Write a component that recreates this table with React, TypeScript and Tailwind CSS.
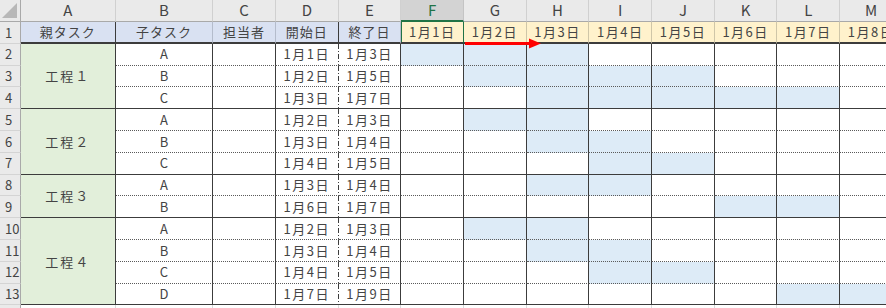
import React from "react";

type Task = [string, number, number];

const groups: { name: string; tasks: Task[] }[] = [
  { name: "工程１", tasks: [["A", 1, 3], ["B", 2, 5], ["C", 3, 7]] },
  { name: "工程２", tasks: [["A", 2, 3], ["B", 3, 4], ["C", 4, 5]] },
  { name: "工程３", tasks: [["A", 3, 4], ["B", 6, 7]] },
  { name: "工程４", tasks: [["A", 2, 3], ["B", 3, 4], ["C", 4, 5], ["D", 7, 9]] },
];

const letters = ["A", "B", "C", "D", "E", "F", "G", "H", "I", "J", "K", "L", "M"];
const days = [1, 2, 3, 4, 5, 6, 7, 8];
const spanClass: Record<number, string> = { 2: "row-span-2", 3: "row-span-3", 4: "row-span-4" };

const rowHead =
  "flex items-center pl-[5px] bg-[#eaeaea] border-r border-r-[#a9a9a9] border-b border-b-[#d4d4d4] text-[13px] text-[#444]";

// dash-dot line on the right edge of the start-date column
const dashDot =
  "bg-[repeating-linear-gradient(to_bottom,#3c3c3c_0_5px,transparent_5px_7px,#3c3c3c_7px_8px,transparent_8px_10px)] bg-[length:1px_100%] bg-right bg-no-repeat pr-px";

function App() {
  let rowNo = 1;
  const rows: React.ReactNode[] = [];

  groups.forEach((g, gi) => {
    g.tasks.forEach((t, ti) => {
      rowNo++;
      const last = ti === g.tasks.length - 1;
      const bottom = last
        ? "border-b border-b-[#3c3c3c]"
        : "border-b border-b-[#5a5a5a] [border-bottom-style:dotted]";
      const [name, start, end] = t;
      rows.push(
        <div key={`h${rowNo}`} className={rowHead}>
          {rowNo}
        </div>
      );
      if (ti === 0) {
        rows.push(
          <div
            key={`g${gi}`}
            className={`${spanClass[g.tasks.length]} flex items-center justify-center bg-[#e2efda] border-r border-r-[#3c3c3c] border-b border-b-[#3c3c3c] text-[13px] tracking-[2px] text-[#444]`}
          >
            {g.name}
          </div>
        );
      }
      rows.push(
        <div key={`b${rowNo}`} className={`flex items-center justify-center border-r border-r-[#3c3c3c] ${bottom} text-[13px] text-[#444]`}>
          {name}
        </div>,
        <div key={`c${rowNo}`} className={`border-r border-r-[#3c3c3c] ${bottom}`} />,
        <div
          key={`d${rowNo}`}
          className={`flex items-center justify-center ${dashDot} ${bottom} text-[13px] tracking-[1.5px] text-[#444]`}
        >
          1月{start}日
        </div>,
        <div key={`e${rowNo}`} className={`flex items-center justify-center border-r border-r-[#3c3c3c] ${bottom} text-[13px] tracking-[1.5px] text-[#444]`}>
          1月{end}日
        </div>
      );
      days.forEach((d) => {
        const on = d >= start && d <= end;
        rows.push(
          <div
            key={`x${rowNo}-${d}`}
            className={`border-r border-r-[#3c3c3c] ${bottom} ${on ? "bg-[#ddebf7]" : "bg-white"}`}
          />
        );
      });
    });
  });

  return (
    <div className="relative w-[886px] h-[308px] overflow-hidden bg-white font-['Noto_Sans_CJK_JP','Liberation_Sans',sans-serif]">
      <div className="grid grid-cols-[21px_94.7px_97.6px_repeat(11,62.7px)] grid-rows-[22px_repeat(13,21.8px)_21px]">
        {/* column letters */}
        <div className="relative bg-[#eaeaea] border-r border-r-[#a9a9a9] border-b border-b-[#a9a9a9]">
          <svg className="absolute right-[3px] bottom-[3px]" width="15" height="15" viewBox="0 0 15 15">
            <polygon points="15,0 15,15 0,15" fill="#b8b8b8" />
          </svg>
        </div>
        {letters.map((l) =>
          l === "F" ? (
            <div
              key={l}
              className="flex items-center justify-center bg-[#d3d3d3] border-r border-r-[#c4c4c4] border-b-2 border-b-[#217346] text-[15px] text-[#217346]"
            >
              {l}
            </div>
          ) : (
            <div
              key={l}
              className="flex items-center justify-center bg-[#eaeaea] border-r border-r-[#d0d0d0] border-b border-b-[#a9a9a9] text-[15px] text-[#444]"
            >
              {l}
            </div>
          )
        )}

        {/* row 1 titles */}
        <div className={rowHead}>1</div>
        {["親タスク", "子タスク", "担当者", "開始日", "終了日"].map((t, i) => (
          <div
            key={t}
            className={`flex items-center justify-center bg-[#d9e1f2] border-r ${
              i === 0 || i === 3 ? "border-r-[#3c3c3c]" : "border-r-[#b4bccc]"
            } border-b-2 border-b-[#3c3c3c] text-[13px] tracking-[1px] text-[#444]`}
          >
            {t}
          </div>
        ))}
        {days.map((d) => (
          <div
            key={`t${d}`}
            className={`flex items-center justify-center bg-[#fff2cc] border-b-2 border-b-[#3c3c3c] text-[13px] tracking-[1.5px] text-[#444] ${
              d === 1
                ? "border-r border-r-[#217346] shadow-[inset_1px_0_0_#217346]"
                : "border-r border-r-[#cfc6a8]"
            }`}
          >
            1月{d}日
          </div>
        ))}

        {rows}

        {/* row 14, mostly below the edge */}
        <div className="bg-[#eaeaea] border-r border-r-[#a9a9a9]" />
        {letters.map((l) => (
          <div key={`r14${l}`} className="bg-white border-r border-r-[#d9d9d9]" />
        ))}
      </div>

      {/* red arrow */}
      <svg className="absolute left-[463px] top-[37px]" width="80" height="14" viewBox="0 0 80 14">
        <rect x="2" y="5" width="66" height="3" fill="#ff0000" />
        <polygon points="66,1.5 78,6.5 66,11.5" fill="#ff0000" />
      </svg>
    </div>
  );
}

export default App;
